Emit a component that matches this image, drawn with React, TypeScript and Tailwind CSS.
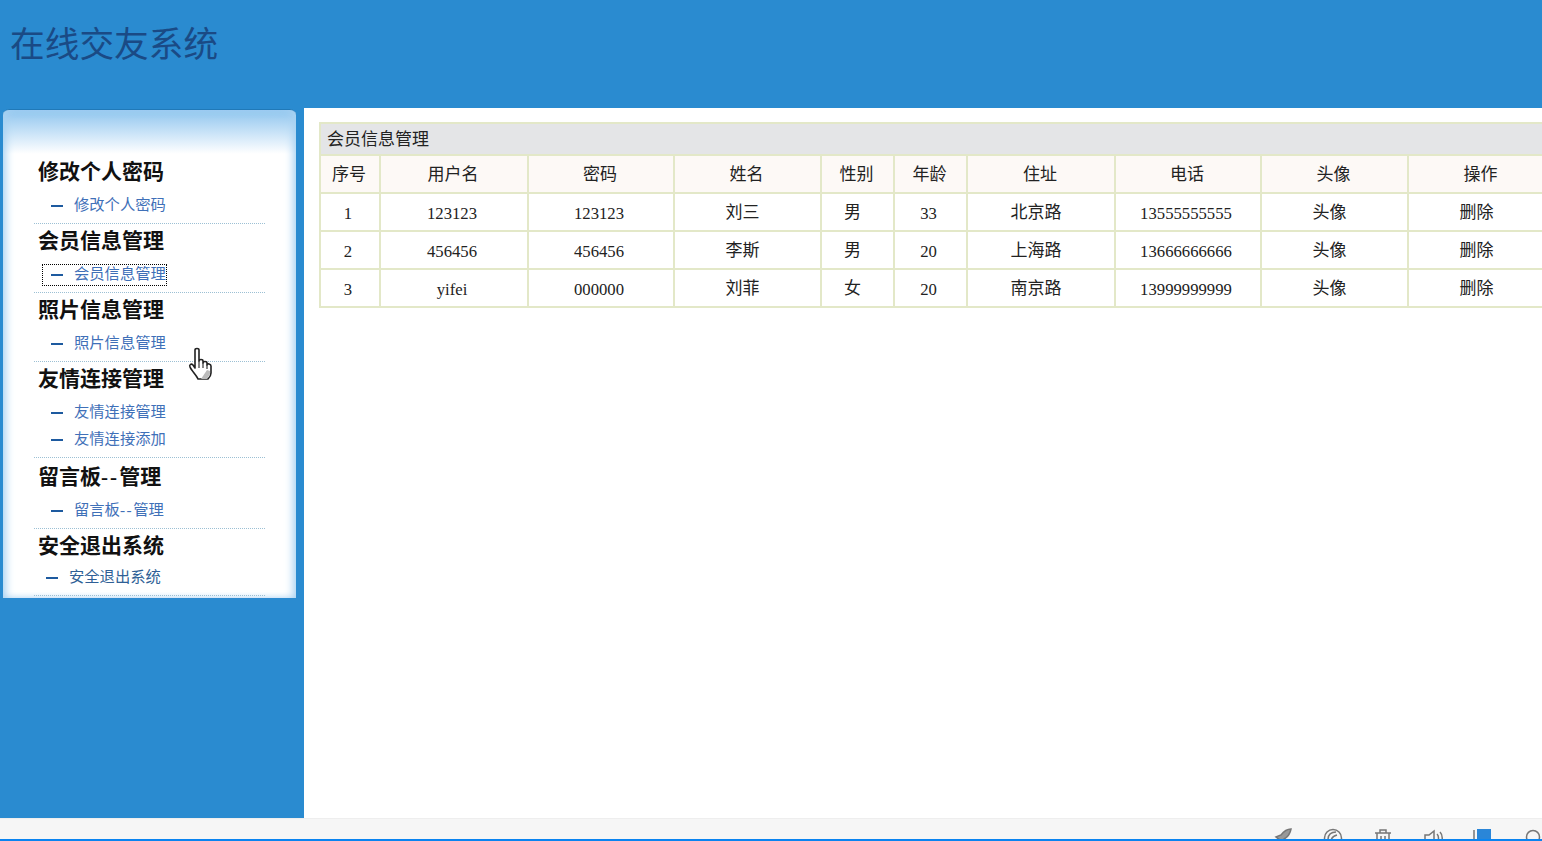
import React from "react";

type NavSection = {
  title: string;
  links: string[];
  top: number;
  compact?: boolean;
};

const font = { fontFamily: '"Liberation Serif", "Noto Sans CJK SC", serif' };

const sections: NavSection[] = [
  { title: "修改个人密码", links: ["修改个人密码"], top: 0 },
  { title: "会员信息管理", links: ["会员信息管理"], top: 0 },
  { title: "照片信息管理", links: ["照片信息管理"], top: 0 },
  { title: "友情连接管理", links: ["友情连接管理", "友情连接添加"], top: 0 },
  { title: "留言板--管理", links: ["留言板--管理"], top: 2 },
  { title: "安全退出系统", links: ["安全退出系统"], top: 0, compact: true },
];

const columns = [60, 148, 146, 147, 73, 73, 148, 146, 147, 147];
const headers = ["序号", "用户名", "密码", "姓名", "性别", "年龄", "住址", "电话", "头像", "操作"];

const members = [
  { id: "1", user: "123123", pass: "123123", name: "刘三", sex: "男", age: "33", addr: "北京路", tel: "13555555555" },
  { id: "2", user: "456456", pass: "456456", name: "李斯", sex: "男", age: "20", addr: "上海路", tel: "13666666666" },
  { id: "3", user: "yifei", pass: "000000", name: "刘菲", sex: "女", age: "20", addr: "南京路", tel: "13999999999" },
];

const HandCursor = () => (
  <svg width="26" height="34" viewBox="0 0 26 34" className="absolute left-[188px] top-[347px]">
    <path
      d="M7 3c0-2 4-2 4 0v11c0-2 4-2 4 0v2c0-2 4-2 4 0v2c0-2 4-1 4 1v7c0 3-2 5-3 6H10c-1-3-7-9-8-12-1-2 1-4 3-2l2 3z"
      fill="#fff"
      stroke="#222"
      strokeWidth="1.6"
      strokeLinejoin="round"
    />
    <path d="M19 23l3 1v3l-3 5h-6z" fill="#bbb" />
    <path d="M11 14v7M15 16v5M19 18v4" stroke="#222" strokeWidth="1.1" />
  </svg>
);

const TrayIcons = () => (
  <div className="flex h-full translate-x-[1px] justify-end gap-[30px] pt-[9px]">
    <svg width="20" height="20" viewBox="0 0 20 20" fill="none" stroke="#777" strokeWidth="1.5">
      <path d="M3 9l5-2c3-4 6-6 10-6-1 5-3 8-7 10l-2 5-2-4z" fill="#999" />
    </svg>
    <svg width="20" height="20" viewBox="0 0 20 20" fill="none" stroke="#777" strokeWidth="1.5">
      <circle cx="10" cy="10" r="8.5" />
      <path d="M5 12c0-5 3-8 8-8M8 14c0-4 2-6 6-7" />
    </svg>
    <svg width="20" height="20" viewBox="0 0 20 20" fill="none" stroke="#777" strokeWidth="1.5">
      <path d="M2 5h16M7 5V2h6v3M4 5v13h12V5M8 8v7M12 8v7" />
    </svg>
    <svg width="20" height="20" viewBox="0 0 20 20" fill="none" stroke="#777" strokeWidth="1.5">
      <path d="M2 7v6h4l5 4V3L6 7zM14 6c2 2 2 6 0 8M17 4c3 3 3 9 0 12" />
    </svg>
    <svg width="20" height="20" viewBox="0 0 20 20" fill="none">
      <path d="M1 2v16h16" stroke="#777" strokeWidth="1.5" />
      <rect x="4" y="1" width="14" height="14" fill="#2a86d8" />
    </svg>
    <svg width="20" height="20" viewBox="0 0 20 20" fill="none" stroke="#777" strokeWidth="1.5">
      <circle cx="10" cy="9" r="6.5" />
    </svg>
  </div>
);

// the two hyphens in 留言板--管理 run wider in the original font
const Label = ({ text }: { text: string }) => {
  const parts = text.split("--");
  if (parts.length === 1) return <>{text}</>;
  return (
    <>
      {parts[0]}
      <span className="tracking-[0.1em]">--</span>
      {parts[1]}
    </>
  );
};

const Sidebar = () => (
  <div className="relative ml-[3px] mt-[1px] h-[489px] w-[293px] overflow-hidden rounded-t-md border-t border-t-[#2079b8] bg-white bg-gradient-to-b from-[#8fc5ee] from-0% to-white to-[9%] px-[31px] pt-[45px] shadow-[inset_5px_0_8px_-2px_#a9d2f2,inset_-5px_0_8px_-2px_#a9d2f2]">
    {sections.map((s) => (
      <div key={s.title} className="border-b border-dotted border-b-[#9cc0d4] pb-[4px]" style={{ paddingTop: s.top }}>
        <h3 className="h-[34px] pl-[4px] text-[21px] font-bold leading-[34px] text-[#111]">
          <Label text={s.title} />
        </h3>
        <ul className={s.compact ? "pt-[1px]" : "pt-[3px]"}>
          {s.links.map((l) => (
            <li
              key={l}
              className={`flex h-[27px] items-center text-[15.3px] ${s.compact ? "pl-[12px] text-[#2f5f96]" : "pl-[17px] text-[#3f70b8]"}`}
            >
              <span className={l === "会员信息管理" ? "flex h-[20px] items-center -ml-[8px] pl-[8px] outline-1 outline-dotted outline-black" : "flex items-center"}>
                <span className="mr-[11px] block h-[2px] w-[12px] bg-[#1d5a9f]" />
                <span>
                  <Label text={l} />
                </span>
              </span>
            </li>
          ))}
        </ul>
      </div>
    ))}
  </div>
);

const MemberTable = () => {
  const dataCell = "border-2 border-[#e3e8c8] text-center text-[#222]";
  const num = `${dataCell} pr-[4px] pt-[4px] text-[16.7px]`;
  const cjk = `${dataCell} pr-[10px] text-[17px]`;
  return (
    <table className="w-[1235px] table-fixed border-collapse leading-none">
      <colgroup>
        {columns.map((w, i) => (
          <col key={i} style={{ width: w }} />
        ))}
      </colgroup>
      <thead>
        <tr className="h-[32px]">
          <th colSpan={10} className="border-2 border-[#e3e8c8] bg-[#e4e5e7] pl-[6px] text-left text-[17px] font-normal text-[#222]">
            会员信息管理
          </th>
        </tr>
        <tr className="h-[38px]">
          {headers.map((h) => (
            <th key={h} className="border-2 border-[#e3e8c8] bg-[#fdf9f6] pr-[2px] text-center text-[17px] font-normal text-[#222]">
              {h}
            </th>
          ))}
        </tr>
      </thead>
      <tbody>
        {members.map((m) => (
          <tr key={m.id} className="h-[38px]">
            <td className={num}>{m.id}</td>
            <td className={num}>{m.user}</td>
            <td className={num}>{m.pass}</td>
            <td className={cjk}>{m.name}</td>
            <td className={cjk}>{m.sex}</td>
            <td className={num}>{m.age}</td>
            <td className={cjk}>{m.addr}</td>
            <td className={num}>{m.tel}</td>
            <td className={cjk}>头像</td>
            <td className={cjk}>删除</td>
          </tr>
        ))}
      </tbody>
    </table>
  );
};

export default function App() {
  return (
    <div className="relative flex h-[841px] w-[1542px] flex-col overflow-hidden bg-[#2a8bd0]" style={font}>
      <header className="h-[108px] shrink-0 pl-[10px] pt-[23px]">
        <h1 className="text-[34.7px] font-normal leading-[46px] text-[#1a4a85]">在线交友系统</h1>
      </header>
      <div className="flex h-[710px] shrink-0">
        <aside className="w-[304px] shrink-0">
          <Sidebar />
        </aside>
        <main className="flex-1 overflow-hidden bg-white pl-[15px] pt-[14px]">
          <MemberTable />
        </main>
      </div>
      <footer className="h-[23px] shrink-0 overflow-hidden border-t border-t-[#eeeeee] bg-[#f6f6f6] border-b-2 border-b-[#0a84f0]">
        <TrayIcons />
      </footer>
      <HandCursor />
    </div>
  );
}
